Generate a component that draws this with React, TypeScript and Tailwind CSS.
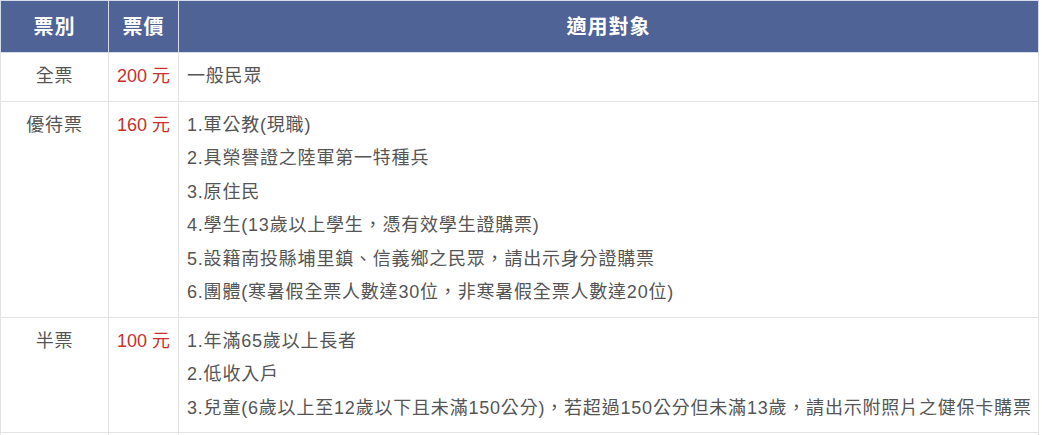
const rows = [
  { type: "全票", price: "200 元", items: ["一般民眾"] },
  {
    type: "優待票",
    price: "160 元",
    items: [
      "1.軍公教(現職)",
      "2.具榮譽證之陸軍第一特種兵",
      "3.原住民",
      "4.學生(13歲以上學生，憑有效學生證購票)",
      "5.設籍南投縣埔里鎮、信義鄉之民眾，請出示身分證購票",
      "6.團體(寒暑假全票人數達30位，非寒暑假全票人數達20位)",
    ],
  },
  {
    type: "半票",
    price: "100 元",
    items: [
      "1.年滿65歲以上長者",
      "2.低收入戶",
      "3.兒童(6歲以上至12歲以下且未滿150公分)，若超過150公分但未滿13歲，請出示附照片之健保卡購票",
    ],
  },
];

export default function App() {
  return (
    <div
      className="w-[1042px] h-[435px] overflow-hidden bg-white"
      style={{ fontFamily: '"Liberation Sans", "Noto Sans CJK TC", sans-serif' }}
    >
      <table className="w-[1039px] table-fixed border-collapse">
        <colgroup>
          <col className="w-[108px]" />
          <col className="w-[70px]" />
          <col />
        </colgroup>
        <thead>
          <tr className="bg-[#4f6397] text-white text-[20px] font-bold h-[52px]">
            <th className="border border-[#d5dbe8] font-bold tracking-[1px]">票別</th>
            <th className="border border-[#d5dbe8] font-bold tracking-[1px]">票價</th>
            <th className="border border-[#d5dbe8] font-bold tracking-[1px]">適用對象</th>
          </tr>
        </thead>
        <tbody className="text-[18px] text-[#555] leading-[33.5px] tracking-[0.8px]">
          {rows.map((r) => (
            <tr key={r.type}>
              <td className="border border-[#e3e3e3] text-center align-top py-[7px]">
                {r.type}
              </td>
              <td className="border border-[#e3e3e3] text-center align-top py-[7px] text-[#c9302c] tracking-normal">
                {r.price}
              </td>
              <td className="border border-[#e3e3e3] align-top py-[7px] pl-[8px] whitespace-nowrap">
                {r.items.map((it) => (
                  <div key={it}>{it}</div>
                ))}
              </td>
            </tr>
          ))}
          <tr>
            <td className="border border-[#e3e3e3] h-[40px]" />
            <td className="border border-[#e3e3e3]" />
            <td className="border border-[#e3e3e3]" />
          </tr>
        </tbody>
      </table>
    </div>
  );
}
